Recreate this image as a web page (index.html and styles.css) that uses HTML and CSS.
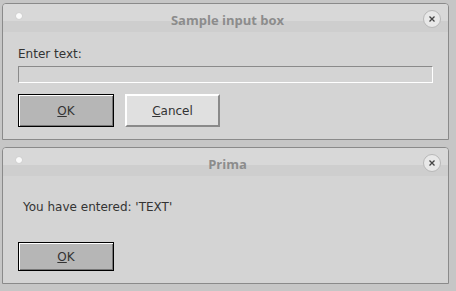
FILE: index.html
```html
<!DOCTYPE html>
<html lang="en">
<head>
  <meta charset="UTF-8">
  <title>Prima dialogs</title>
  <link rel="stylesheet" href="styles.css">
</head>
<body>

  <!-- Input box window -->
  <div class="window input-window">
    <div class="titlebar">
      <span class="dot"></span>
      <span class="title">Sample input box</span>
      <span class="close">
        <svg width="10" height="10" viewBox="0 0 10 10"><path d="M2.5 2.5L7.5 7.5M7.5 2.5L2.5 7.5" stroke="#444" stroke-width="1.3"/></svg>
      </span>
    </div>
    <div class="content">
      <div class="label">Enter text:</div>
      <div class="field"></div>
      <div class="buttons">
        <button class="btn btn-default"><u>O</u>K</button>
        <button class="btn"><u>C</u>ancel</button>
      </div>
    </div>
  </div>

  <!-- Message window -->
  <div class="window message-window">
    <div class="titlebar">
      <span class="dot"></span>
      <span class="title">Prima</span>
      <span class="close">
        <svg width="10" height="10" viewBox="0 0 10 10"><path d="M2.5 2.5L7.5 7.5M7.5 2.5L2.5 7.5" stroke="#444" stroke-width="1.3"/></svg>
      </span>
    </div>
    <div class="content">
      <div class="message">You have entered: 'TEXT'</div>
      <div class="buttons">
        <button class="btn btn-default btn-short"><u>O</u>K</button>
      </div>
    </div>
  </div>

</body>
</html>
```

FILE: styles.css
```css
/* Desktop */
body {
  margin: 0;
  padding: 3px 0 0 2px;
  width: 456px;
  height: 291px;
  box-sizing: border-box;
  background: #c6c6c6;
  font-family: 'DejaVu Sans', sans-serif;
  overflow: hidden;
  display: flex;
  flex-direction: column;
  gap: 7px;
}

/* Window frame */
.window {
  width: 447px;
  height: 137px;
  box-sizing: border-box;
  border: 1px solid #8a8a8a;
  border-radius: 4px 4px 0 0;
  background: #d4d4d4;
  display: flex;
  flex-direction: column;
}

/* Title bar */
.titlebar {
  height: 28px;
  flex-shrink: 0;
  position: relative;
  display: flex;
  align-items: center;
  justify-content: center;
  background: linear-gradient(#d8d8d8 0, #d8d8d8 17px, #cecece 17px, #cecece 100%);
  border-radius: 3px 3px 0 0;
}
.title {
  font-family: 'Open Sans', sans-serif;
  font-weight: bold;
  font-size: 13px;
  color: #8c8c8c;
  margin: 3px 0 0 4px;
}
.dot {
  position: absolute;
  left: 13px;
  top: 9px;
  width: 6px;
  height: 6px;
  border-radius: 50%;
  background: #fafafa;
  box-shadow: 0 0 1px #aaa;
}
.close {
  position: absolute;
  right: 7px;
  top: 6px;
  width: 16px;
  height: 16px;
  border-radius: 50%;
  background: #e8e8e8;
  border: 1px solid #b8b8b8;
  display: flex;
  align-items: center;
  justify-content: center;
}

/* Content */
.content {
  padding: 0 0 0 15px;
}
.label {
  font-size: 12px;
  color: #333;
  margin-top: 15px;
  height: 17px;
}
.field {
  width: 415px;
  height: 17px;
  box-sizing: border-box;
  margin-top: 2px;
  border: 1px solid #fff;
  border-top-color: #8a8a8a;
  border-left-color: #8a8a8a;
  background: #d4d4d4;
}
.buttons {
  display: flex;
  gap: 11px;
  margin-top: 11px;
}
.message-window .buttons {
  margin-top: 28px;
}
.message {
  font-size: 12px;
  color: #333;
  margin: 24px 0 0 5px;
}

/* Buttons */
.btn {
  width: 95px;
  height: 33px;
  box-sizing: border-box;
  font-family: 'DejaVu Sans', sans-serif;
  font-size: 12px;
  color: #333;
  background: #e0e0e0;
  border: 2px solid #fff;
  border-right-color: #8a8a8a;
  border-bottom-color: #8a8a8a;
  padding: 0;
}
.btn-default {
  width: 96px;
  background: #b6b6b6;
  border: 1px solid #000;
  box-shadow: inset 1px 1px 0 #fff, inset -1px -1px 0 #777;
}
.btn-short {
  height: 29px;
}
```
